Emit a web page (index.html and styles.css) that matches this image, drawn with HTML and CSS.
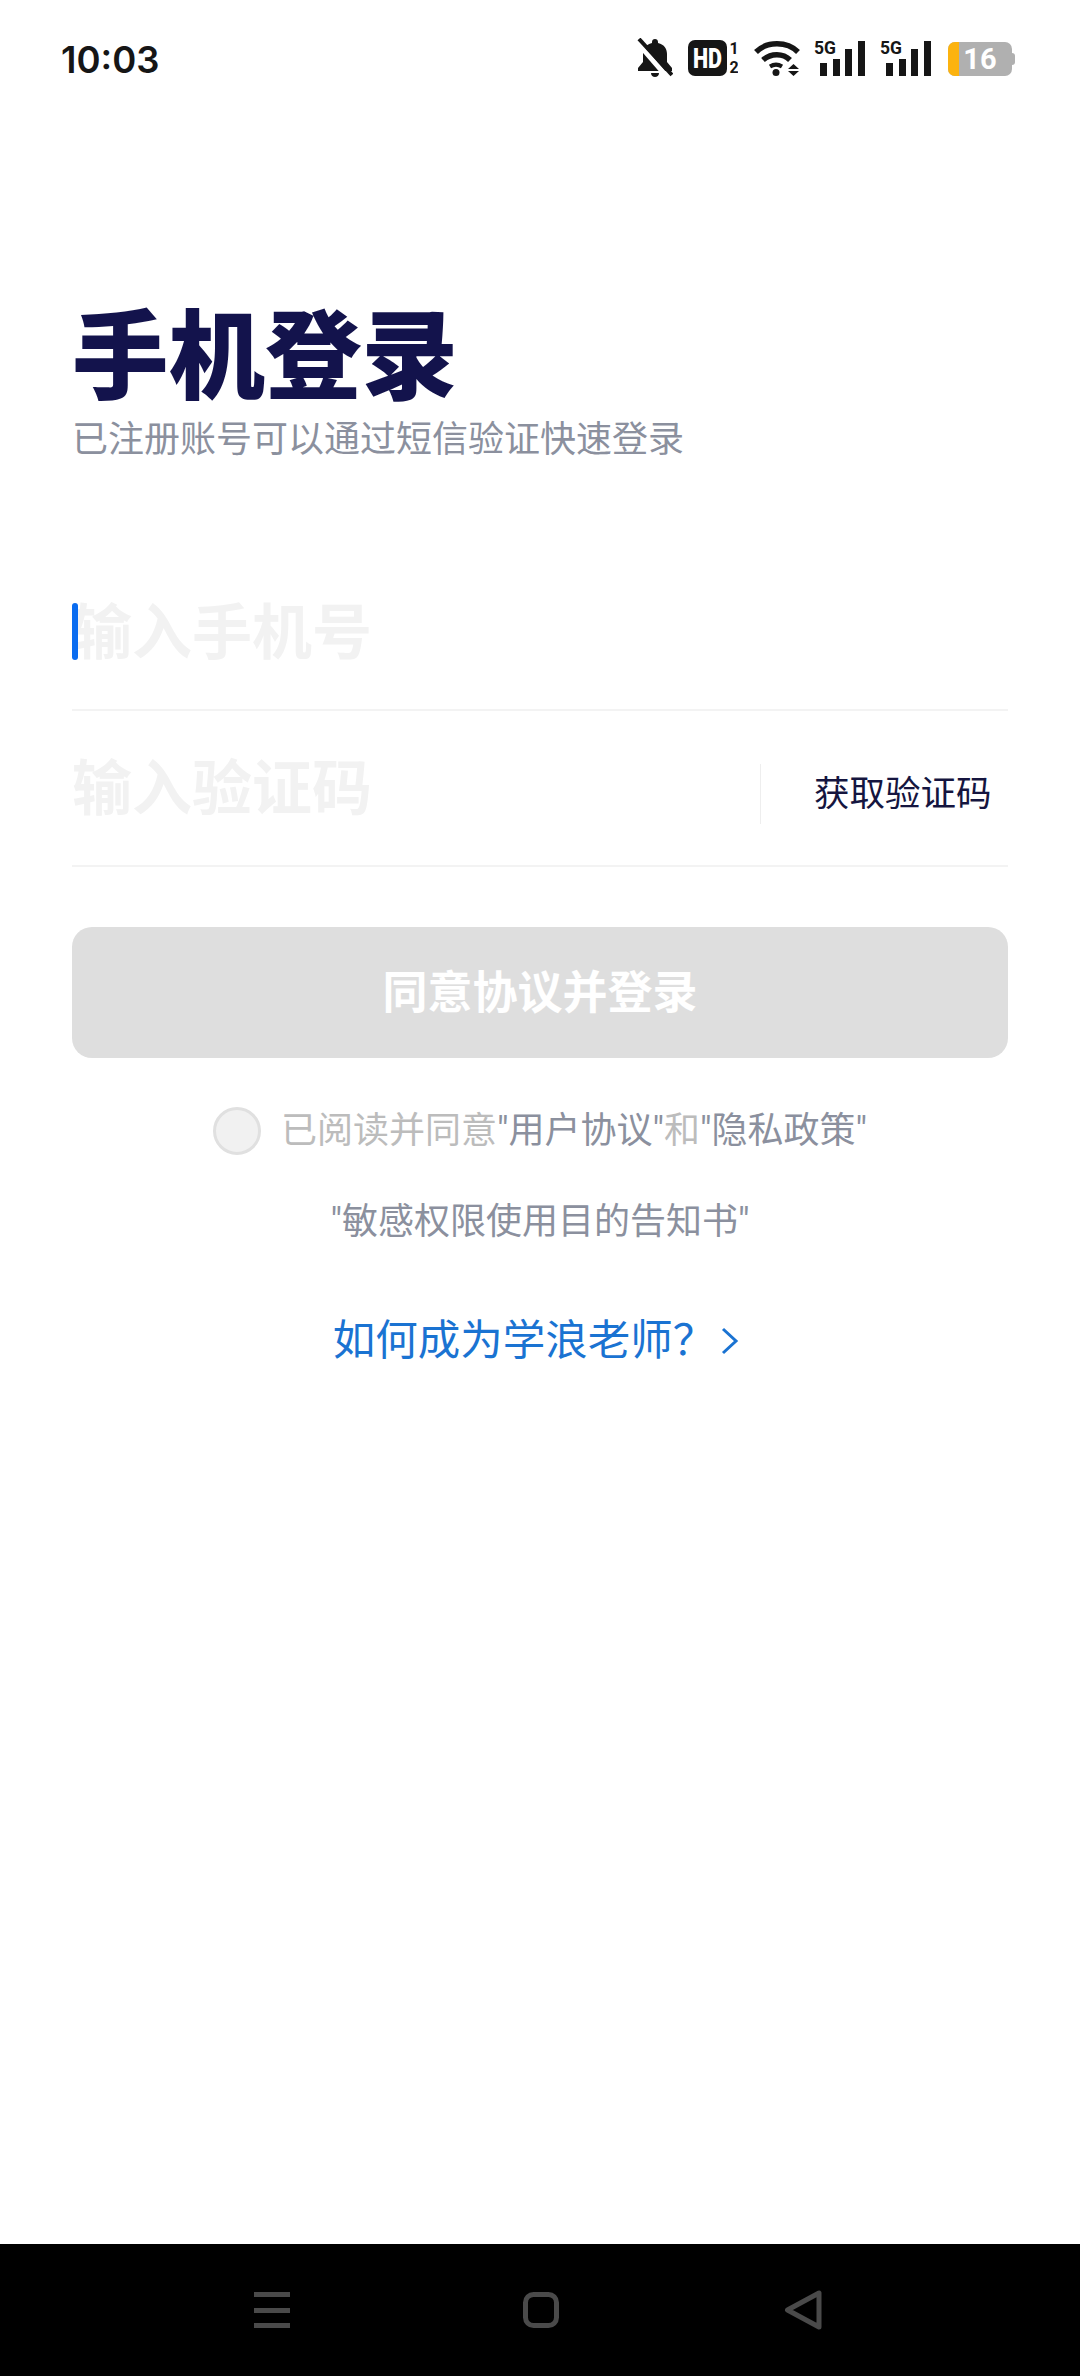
FILE: index.html
```html
<!DOCTYPE html>
<html lang="zh-CN">
<head>
  <meta charset="UTF-8">
  <title>手机登录</title>
  <link rel="stylesheet" href="styles.css">
</head>
<body>

<div class="status-bar">
  <span class="clock">10:03</span>
  <div class="status-icons">
    <!-- muted bell -->
    <svg class="ic-bell" width="36" height="40" viewBox="0 0 36 40">
      <path d="M18 1c-1.800 0-3 1.200-3 3v1C8.500 6.500 6 11 6 16v8l-5 6v3h34v-3l-5-6v-8c0-5-2.500-9.500-9-11V4c0-1.800-1.200-3-3-3z" fill="#161616"/>
      <path d="M14 35h8c0 2.400-1.800 4-4 4s-4-1.600-4-4z" fill="#161616"/>
      <path d="M-2 2l33 38" stroke="#fff" stroke-width="5"/>
      <path d="M2 1l33 36" stroke="#161616" stroke-width="4"/>
    </svg>
    <!-- HD 1/2 -->
    <svg class="ic-hd" width="50" height="36" viewBox="0 0 50 36">
      <rect width="39" height="36" rx="7" fill="#161616"/>
      <text x="5" y="28" class="hd-text" textLength="29" lengthAdjust="spacingAndGlyphs">HD</text>
      <text x="46" y="14" class="sim-text" text-anchor="middle">1</text>
      <text x="46" y="33" class="sim-text" text-anchor="middle">2</text>
    </svg>
    <!-- wifi -->
    <svg class="ic-wifi" width="46" height="36" viewBox="0 0 46 36">
      <path d="M2 12C13 1 33 1 44 12" fill="none" stroke="#161616" stroke-width="5.500"/>
      <path d="M9 20c8-7 20-7 27 0" fill="none" stroke="#161616" stroke-width="5.500"/>
      <path d="M16 26.500c4-2.500 8-2.500 12 0" fill="none" stroke="#161616" stroke-width="4"/>
      <circle cx="22" cy="32.500" r="3.500" fill="#161616"/>
      <path d="M34 29l5.500-5 5.500 5zM34 31l5.500 5 5.500-5z" fill="#161616"/>
    </svg>
    <!-- 5G signal -->
    <svg class="ic-signal" width="52" height="41" viewBox="0 -5 52 41">
      <text x="0" y="13.500" class="net-text" textLength="22" lengthAdjust="spacingAndGlyphs">5G</text>
      <rect x="6" y="23" width="7" height="13" fill="#161616"/>
      <rect x="19" y="19" width="7" height="17" fill="#161616"/>
      <rect x="31" y="9" width="7" height="27" fill="#161616"/>
      <rect x="44" y="1" width="7" height="35" fill="#161616"/>
    </svg>
    <svg class="ic-signal" width="52" height="41" viewBox="0 -5 52 41">
      <text x="0" y="13.500" class="net-text" textLength="22" lengthAdjust="spacingAndGlyphs">5G</text>
      <rect x="6" y="23" width="7" height="13" fill="#161616"/>
      <rect x="19" y="19" width="7" height="17" fill="#161616"/>
      <rect x="31" y="9" width="7" height="27" fill="#161616"/>
      <rect x="44" y="1" width="7" height="35" fill="#161616"/>
    </svg>
    <!-- battery -->
    <svg class="ic-battery" width="67" height="34" viewBox="0 0 67 34">
      <rect x="0" y="0" width="64" height="34" rx="7" fill="#b0b0b0"/>
      <path d="M7 0h4v34H7a7 7 0 0 1-7-7V7a7 7 0 0 1 7-7z" fill="#fcb30f"/>
      <path d="M64 11c2 0 3 1 3 3v6c0 2-1 3-3 3z" fill="#b0b0b0"/>
      <text x="32" y="27" class="batt-text" text-anchor="middle">16</text>
    </svg>
  </div>
</div>

<div class="main">
  <h1 class="title">手机登录</h1>
  <div class="subtitle">已注册账号可以通过短信验证快速登录</div>

  <div class="field">
    <span class="caret"></span>
    <span class="placeholder">输入手机号</span>
  </div>
  <div class="field">
    <span class="placeholder">输入验证码</span>
    <span class="get-code">获取验证码</span>
  </div>

  <button class="login-btn">同意协议并登录</button>

  <div class="agree">
    <span class="radio"></span>
    <span>已阅读并同意<span class="doc">"用户协议"</span>和<span class="doc">"隐私政策"</span></span>
  </div>
  <div class="notice">"敏感权限使用目的告知书"</div>

  <div class="teacher-link">
    <span>如何成为学浪老师？</span>
    <svg width="18" height="28" viewBox="0 0 18 28">
      <path d="M2 2l13 12L2 26" fill="none" stroke="#1a73d2" stroke-width="3"/>
    </svg>
  </div>
</div>

<div class="nav-bar">
  <svg width="36" height="36" viewBox="0 0 36 36">
    <rect y="0" width="36" height="5" fill="#4a4a4a"/>
    <rect y="16" width="36" height="5" fill="#4a4a4a"/>
    <rect y="31" width="36" height="5" fill="#4a4a4a"/>
  </svg>
  <svg class="nav-home" width="36" height="36" viewBox="0 0 36 36">
    <rect x="2.500" y="2.500" width="31" height="31" rx="8" fill="none" stroke="#4a4a4a" stroke-width="5"/>
  </svg>
  <svg width="38" height="40" viewBox="0 0 38 40">
    <path d="M3.500 20L35 3v34z" fill="none" stroke="#4a4a4a" stroke-width="5" stroke-linejoin="round"/>
  </svg>
</div>

</body>
</html>
```

FILE: styles.css
```css
* {
  box-sizing: border-box;
}
body {
  margin: 0;
  height: 2376px;
  display: flex;
  flex-direction: column;
  background: #fff;
  font-family: Roboto, "Noto Sans CJK SC", sans-serif;
}
.status-bar {
  height: 84px;
  flex: none;
  padding: 38px 65px 0 61px;
  display: flex;
  justify-content: space-between;
  align-items: flex-start;
}
.clock {
  font-family: Inter, Roboto, sans-serif;
  font-size: 36.500px;
  font-weight: 600;
  line-height: 44px;
  color: #161616;
}
.status-icons {
  display: flex;
  align-items: flex-end;
  gap: 14px;
  height: 40px;
}
.ic-hd {
  margin-left: 1px;
  margin-bottom: 2px;
}
.ic-wifi {
  margin-left: 2px;
  margin-bottom: 2px;
}
.ic-signal {
  margin-bottom: 2px;
}
.ic-battery {
  margin-left: 2px;
  margin-bottom: 2px;
}
.hd-text {
  font-family: Roboto, sans-serif;
  font-size: 27px;
  font-weight: 900;
  fill: #fff;
}
.sim-text {
  font-family: Roboto, sans-serif;
  font-size: 16px;
  font-weight: 700;
  fill: #161616;
}
.net-text {
  font-family: Roboto, sans-serif;
  font-size: 19px;
  font-weight: 700;
  fill: #161616;
}
.batt-text {
  font-family: Roboto, sans-serif;
  font-size: 29px;
  font-weight: 700;
  fill: #fff;
}
.main {
  flex: 1;
  padding: 227px 72px 0;
}
.title {
  margin: 0;
  font-size: 96.500px;
  line-height: 94px;
  font-weight: 900;
  color: #13134c;
}
.subtitle {
  margin-top: 11px;
  margin-bottom: 91px;
  font-size: 36px;
  line-height: 48px;
  color: #8b909e;
}
.field {
  position: relative;
  height: 156px;
  display: flex;
  align-items: center;
  justify-content: space-between;
  border-bottom: 2px solid #f3f3f3;
}
.caret {
  position: absolute;
  left: 0;
  top: 48px;
  width: 6px;
  height: 57px;
  border-radius: 3px;
  background: #0a6cf0;
}
.placeholder {
  padding-top: 4px;
  font-size: 60px;
  line-height: 70px;
  font-weight: 700;
  color: #f2f2f2;
}
.get-code {
  width: 248px;
  height: 60px;
  margin-top: 12px;
  padding-left: 53px;
  border-left: 1px solid #eeeeee;
  font-size: 35.500px;
  line-height: 60px;
  color: #15153f;
}
.login-btn {
  display: block;
  width: 100%;
  height: 131px;
  margin-top: 60px;
  padding-bottom: 8px;
  border: none;
  border-radius: 20px;
  background: #dedede;
  color: #fff;
  font-family: inherit;
  font-size: 45px;
  font-weight: 700;
}
.agree {
  margin-top: 49px;
  display: flex;
  justify-content: center;
  align-items: center;
  gap: 20px;
  font-size: 36px;
  line-height: 48px;
  color: #bcbcbc;
}
.radio {
  width: 48px;
  height: 48px;
  border-radius: 50%;
  border: 3px solid #e0e0e0;
  background: #f1f1f1;
}
.doc {
  color: #8b909e;
}
.notice {
  margin-top: 43px;
  text-align: center;
  font-size: 36px;
  line-height: 48px;
  color: #8b909e;
}
.teacher-link {
  margin-top: 67px;
  padding-right: 8px;
  display: flex;
  justify-content: center;
  align-items: center;
  gap: 6px;
  font-size: 42.500px;
  line-height: 56px;
  color: #1a73d2;
}
.nav-bar {
  height: 132px;
  flex: none;
  padding: 0 258px 0 254px;
  display: flex;
  justify-content: space-between;
  align-items: center;
  background: #000;
}
.nav-home {
  margin-left: 8px;
}
```
